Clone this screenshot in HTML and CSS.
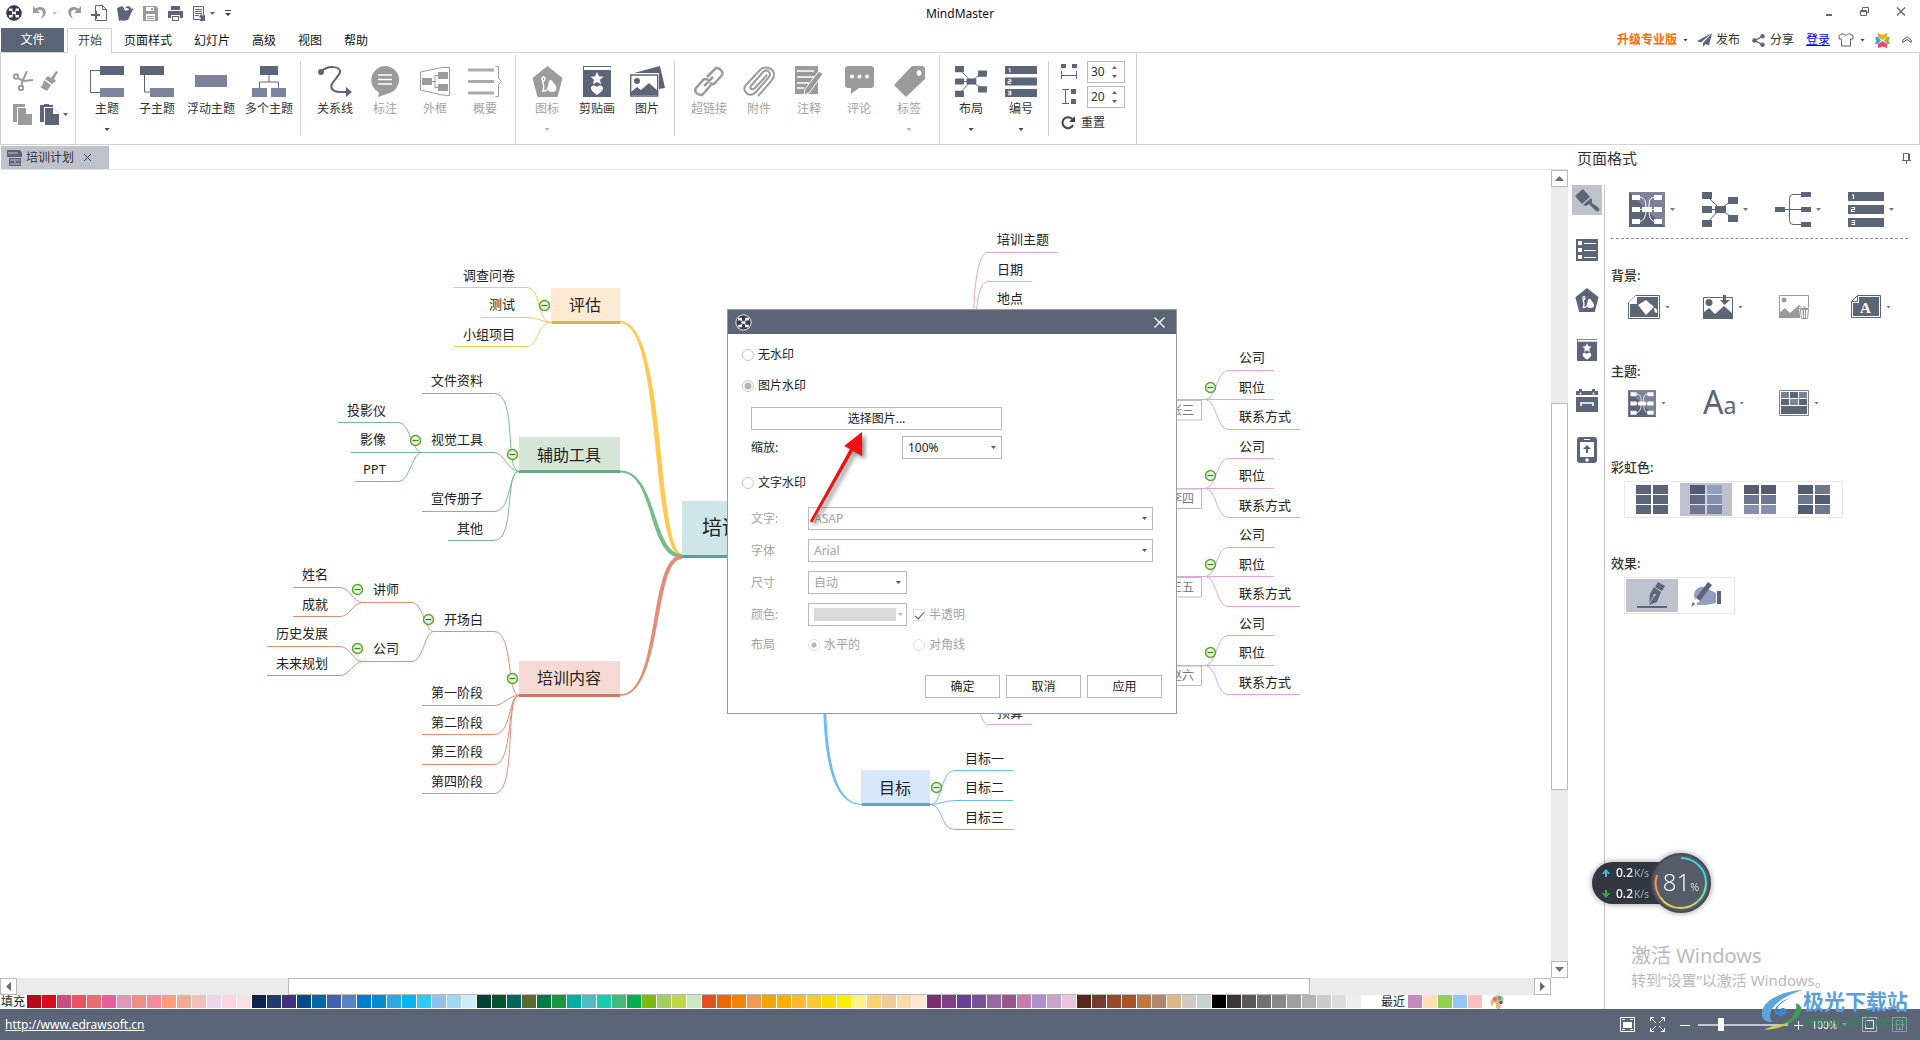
FILE: index.html
```
<!DOCTYPE html>
<html lang="zh-CN">
<head>
<meta charset="utf-8">
<title>MindMaster</title>
<link rel="stylesheet" href="styles.css">
</head>
<body>
<svg class="defs" aria-hidden="true">
  <defs>
    <radialGradient id="toggle-fill"><stop offset="0" stop-color="#fff"/><stop offset="1" stop-color="#d9efd5"/></radialGradient>
    <g id="toggle"><circle r="5" fill="url(#toggle-fill)" stroke="#5ba32b" stroke-width="1.4"/><path d="M-3 0H3" stroke="#3f8f12" stroke-width="1.4"/></g>
    <symbol id="logo" viewBox="0 0 16 16"><circle cx="8" cy="8" r="7.300" fill="#343b4c" stroke="#343b4c"/><path d="M3 3.500h3.500V6H3zM9.500 3.500H13V6H9.500zM3 10h3.500v2.500H3zM9.500 10H13v2.500H9.500zM6 7h4v2H6z" fill="#fff"/><path d="M5.500 5L8 8l2.500-3M5.500 11L8 8l2.500 3" fill="none" stroke="#fff" stroke-width=".800"/></symbol>
    <symbol id="pentagon" viewBox="0 0 30 31"><path d="M15 0L30 12l-5 19H5L0 12z"/><path d="M10 26c2-4 1-8 0-10 3-1 3-5 1-5s-2 3 0 4M11 24c2 3 4-1 6-5" fill="none" stroke="#fff" stroke-width="1.500"/><path d="M16 17c0-4 4-4 5 0 3 2 4 6 2 8-3 2-8 1-8-2z" fill="#fff"/></symbol>
    <symbol id="clipart" viewBox="0 0 28 31"><path d="M0 0h28v1H1v3h27v27H0z"/><path d="M14 6l2 4.300 4.500.500-3.500 3 1 4.500-4-2.400-4 2.400 1-4.500-3.500-3 4.500-.500zM14 29c-4-3-6-4.500-6-7 0-3 4-3.500 6-1 2-2.500 6-2 6 1 0 2.500-2 4-6 7z" fill="#fff"/></symbol>
    <symbol id="layout" viewBox="0 0 36 35"><path d="M5 4l13 13L31 8M5 31l13-14 13 9M5 17.500h13" fill="none" stroke="#5c6478"/><path d="M0 0h10v7H0zM0 14h10v7H0zM0 28h10v7H0zM26 5h10v7H26zM26 23h10v7H26zM13 14h11v7H13z"/></symbol>
    <symbol id="numbers" viewBox="0 0 36 35"><path d="M0 0h36v9H0zM0 13h36v9H0zM0 26h36v9H0z"/><path d="M4 3h1.500v4M3.500 15.500h3v2h-3v2h3.500M3.500 28.500h3v2h-3 3v2h-3" fill="none" stroke="#fff" stroke-width="1.200"/></symbol>
    <symbol id="theme" viewBox="0 0 36 35"><path d="M0 0h36v35H0z"/><path d="M0 0h36v35l-8-7-28-28z" fill="#7c829a"/><path d="M8 5c8 0 9 3 9 12S14 30 8 30M28 5c-8 0-8 3-8 12s2 13 8 13M6 17.500h24" fill="none" stroke="#fff"/><path d="M3 3h8v5H3zM3 15h8v5H3zM3 27h8v5H3zM25 3h8v5h-8zM25 15h8v5h-8zM25 27h8v5h-8zM13 15h10v5H13z" fill="#fff"/></symbol>
  </defs>
</svg>

<header class="titlebar">
  <div class="quick">
    <svg width="16" height="16"><use href="#logo"/></svg>
    <svg class="q-undo" width="24" height="14" fill="#9b9b9b"><path d="M0 0v7h7L4.500 4.500C9 2 12 6 8 13c7-4 6-12-1-12-2 0-3 .8-4.300 1.700z"/><path d="M19 6h5l-2.500 3z" fill="#c4c4c4"/></svg>
    <svg width="14" height="14" fill="#9b9b9b"><path d="M14 0v7H7l2.500-2.500C5 2 2 6 6 13-1 9 0 1 7 1c2 0 3 .8 4.300 1.700z"/></svg>
    <svg width="16" height="16"><path d="M4.500 6V.500h7l4 4v11h-11V13M11.500.500v4h4" fill="none" stroke="#5c6478"/><path d="M4 6h2v3h3v2H6v3H4v-3H0V9h4z" fill="#5c6478"/></svg>
    <svg width="16" height="16" fill="#5c6478"><path d="M0 3l5-2 2 2 1 3-3 9-3 1zM7 6l9-2-5 11-6 1z"/><path d="M8 3c2-3 6-2 6 1l2-1-2 5-4-3h2c0-2-2-2-4-2z"/></svg>
    <svg width="15" height="15" fill="#9b9b9b"><path d="M0 0h13l2 2v13H0z"/><path d="M3 1h8v4H3zM3 8h9v6H3z" fill="#fff"/><path d="M8 2h2v2H8zM4 10h7v1H4zM4 12h7v1H4z"/></svg>
    <svg width="15" height="15" fill="#5c6478"><path d="M3 0h9v4H3zM0 5h15v7h-3V9H3v3H0zM4 10h7v5H4z"/><path d="M5 11h5v3H5z" fill="#fff"/></svg>
    <svg width="22" height="15" fill="#5c6478"><path d="M.500.500h10v13H.500z" fill="none" stroke="#5c6478"/><path d="M2 3h7v1H2zM2 5h7v1H2zM2 7h7v1H2zM2 9h4v1H2zM8 8l2 2 2-1v6H7l1-3-2-1zM17 6h5l-2.500 3z"/></svg>
    <svg width="6" height="14" fill="#444"><path d="M0 4h6v1H0zM0 7h6l-3 3z"/></svg>
  </div>
  <h1 class="app-title">MindMaster</h1>
  <div class="win-buttons">
    <button type="button" aria-label="最小化"><svg width="12" height="12"><path d="M3 8h6v2H3z" fill="#666"/></svg></button>
    <button type="button" aria-label="还原"><svg width="12" height="12" fill="none" stroke="#666"><path d="M1.500 4.500h6v5h-6zM3.500 4V1.500h6v5H8M1 5.500h7"/></svg></button>
    <button type="button" aria-label="关闭"><svg width="12" height="12" fill="none" stroke="#666" stroke-width="1.300"><path d="M2 1.500l8 8M10 1.500l-8 8"/></svg></button>
  </div>
</header>

<nav class="tabs">
  <button type="button" class="file-tab">文件</button>
  <button type="button" class="tab active">开始</button>
  <button type="button" class="tab">页面样式</button>
  <button type="button" class="tab">幻灯片</button>
  <button type="button" class="tab">高级</button>
  <button type="button" class="tab">视图</button>
  <button type="button" class="tab">帮助</button>
  <div class="account">
    <button type="button" class="upgrade">升级专业版</button><i class="caret"></i>
    <svg class="send" width="15" height="14" fill="#5c6478"><path d="M15 0L0 8l4 1.500zM15 0L6 10v4l2.500-3 3.500 1.500z"/></svg><button type="button">发布</button>
    <svg class="share" width="13" height="13" fill="#5c6478"><circle cx="2.500" cy="6.500" r="2.300"/><circle cx="10.500" cy="2.300" r="2.200"/><circle cx="10.500" cy="10.700" r="2.200"/><path d="M10.500 2.300l-8 4.200 8 4.200" fill="none" stroke="#5c6478" stroke-width="1.300"/></svg><button type="button">分享</button>
    <a class="login" href="#login">登录</a>
    <svg class="shirt" width="16" height="14" fill="none" stroke="#5c6478"><path d="M5 .500c1 2 5 2 6 0l4 2v3.500l-2.500 0v7h-9v-7H1V2.500z"/></svg><i class="caret"></i>
    <svg class="butterfly" width="15" height="15"><path d="M3 0l4.500 2L12 0v4L7.500 7 3 4z" fill="#f6a81c"/><path d="M0 4h3l3 3.500L3 11H0l1.500-3.500z" fill="#33a6e0"/><path d="M15 4h-3L9 7.500l3 3.500h3l-1.500-3.500z" fill="#86bf2f"/><path d="M3 15l4.500-1.500L12 15v-4L7.500 8 3 11z" fill="#f0466e"/></svg>
    <svg width="10" height="8" fill="none" stroke="#555"><path d="M.800 4L5 .800 9.200 4v2.500L5 3.500.800 6.500z"/></svg>
  </div>
</nav>

<section class="ribbon">
  <div class="clip-group">
    <button type="button" aria-label="剪切"><svg width="20" height="20" fill="none" stroke="#9b9b9b" stroke-width="2"><circle cx="3" cy="5.500" r="2.200"/><circle cx="8" cy="17" r="2.200"/><path d="M5 7l5 3 10-1M8.500 15l1-5L14 0" /></svg></button>
    <button type="button" aria-label="格式刷"><svg width="18" height="20" fill="#9b9b9b"><path d="M16 0l2 1-4 7 2 2-4 3-7-5 3-3 3 2zM4 9l7 5-4 6-7-4c2 0 3-3 4-7z"/></svg></button>
    <button type="button" aria-label="复制"><svg width="19" height="21" fill="#9b9b9b"><path d="M0 0h12v3H4v15H0zM5 4h8l6 6v11H5z"/><path d="M13 4v6h6z" fill="#fff"/></svg></button>
    <button type="button" aria-label="粘贴"><svg width="28" height="21" fill="#5c6478"><path d="M0 1h4V0h5v1h4v2H4v15H0zM5 4h8l6 6v11H5zM23 9h5l-2.500 3z"/><path d="M13 4v6h6z" fill="#fff"/></svg></button>
  </div>

  <div class="group topics">
    <button type="button" class="tool"><svg width="34" height="31"><path d="M10 4.500H.500v22H10" fill="none" stroke="#5c6478"/><path d="M10 0h24v9H10z" fill="#5c6478"/><path d="M10 22h24v9H10z" fill="#7c829a"/></svg>主题<i class="caret"></i></button>
    <button type="button" class="tool"><svg width="34" height="31"><path d="M4.500 9v17H11" fill="none" stroke="#5c6478"/><path d="M0 0h24v9H0z" fill="#5c6478"/><path d="M10 22h24v9H10z" fill="#7c829a"/></svg>子主题</button>
    <button type="button" class="tool wide"><svg width="32" height="31"><path d="M0 9h32v12H0z" fill="#7c829a"/></svg>浮动主题</button>
    <button type="button" class="tool wide"><svg width="34" height="31"><path d="M17 9v7M7.500 22v-6h19v6" fill="none" stroke="#5c6478"/><path d="M8 0h18v9H8z" fill="#5c6478"/><path d="M0 22h15v9H0zM19 22h15v9H19z" fill="#7c829a"/></svg>多个主题</button>
  </div>
  <div class="group inserts">
    <button type="button" class="tool"><svg width="34" height="31" fill="#5c6478"><circle cx="3" cy="6" r="3"/><path d="M28 21l6 5-6 5z"/><path d="M3 6C9-1 23 0 22 6S9 18 15 24c3 3 7 2 14 2" fill="none" stroke="#5c6478" stroke-width="2"/></svg>关系线</button>
    <button type="button" class="tool" disabled><svg width="30" height="31" fill="#9b9b9b"><path d="M15 0a15 14 0 0 1 3 27.500L8 31l1-4.500A14 14 0 0 1 15 0z"/><path d="M8 9h14M8 13.500h14M8 18h14" stroke="#fff" stroke-width="1.500"/></svg>标注</button>
    <button type="button" class="tool" disabled><svg width="30" height="31" fill="#9b9b9b"><path d="M.500 6L22 1.500h7.500v28L22 29 .500 24zM12 15.500h4m2-6h-3v12h3" fill="none" stroke="#9b9b9b"/><path d="M2 12h10v7H2zM18 6h10v7H18zM18 18h10v7H18z"/></svg>外框</button>
    <button type="button" class="tool" disabled><svg width="34" height="31"><path d="M0 4h26M0 15.500h26M0 27h26" stroke="#ababab" stroke-width="3"/><path d="M27.500.500h3v12l3 3-3 3v12h-3" fill="none" stroke="#9b9b9b"/></svg>概要</button>
  </div>
  <div class="group marks">
    <button type="button" class="tool" disabled><svg width="31" height="31" fill="#9b9b9b"><use href="#pentagon"/></svg>图标<i class="caret"></i></button>
    <button type="button" class="tool"><svg width="28" height="31" fill="#5c6478"><use href="#clipart"/></svg>剪贴画</button>
    <button type="button" class="tool"><svg width="35" height="31" fill="#5c6478"><path d="M4 7L30 0l5 22-6 1V7z"/><path d="M.700 9h27v21h-27z" fill="#fff" stroke="#5c6478" stroke-width="1.400"/><circle cx="7" cy="15" r="3"/><path d="M1 29v-3l6-5 4 3 8-7 9 8v4z"/></svg>图片</button>
  </div>
  <div class="group links">
    <button type="button" class="tool" disabled><svg width="30" height="31" fill="none" stroke="#9b9b9b" stroke-width="2.500"><path d="M13 11l8-8c2-3 9 2 7 6l-7 8c-2 2-4 1-5 0M17 19l-8 9c-3 3-10-2-7-6l7-8c2-2 4-1 6 1M10 20l9-9"/></svg>超链接</button>
    <button type="button" class="tool" disabled><svg width="32" height="31" fill="none" stroke="#9b9b9b" stroke-width="2"><path d="M24 9L12 22c-3 3-6 0-4-2L20 6c4-4 9 1 6 5L13 26c-5 6-14 1-11-6L17 4c5-5 14-2 14 5 0 5-9 13-16 21"/></svg>附件</button>
    <button type="button" class="tool" disabled><svg width="28" height="31" fill="#9b9b9b"><path d="M0 0h23v28H0z"/><path d="M2 5h17M2 11h17M2 17h12M2 22h7" stroke="#fff" stroke-width="1.500"/><path d="M24 5l4 3-14 19-5 2 1-6z" stroke="#fff"/></svg>注释</button>
    <button type="button" class="tool" disabled><svg width="29" height="31" fill="#9b9b9b"><path d="M2 0h25l2 2v18l-2 2H14l-8 6v-6H2l-2-2V2z"/><g fill="#fff"><circle cx="7" cy="10.500" r="2"/><circle cx="14.500" cy="10.500" r="2"/><circle cx="22" cy="10.500" r="2"/></g></svg>评论</button>
    <button type="button" class="tool" disabled><svg width="31" height="31"><path d="M18 0h11l2 2v11L12 31 0 19zM25 4a2.500 3 0 1 0 .1 0z" fill="#9b9b9b" fill-rule="evenodd"/></svg>标签<i class="caret"></i></button>
  </div>
  <div class="group arrange">
    <button type="button" class="tool"><svg width="32" height="31" fill="#5c6478"><use href="#layout"/></svg>布局<i class="caret"></i></button>
    <button type="button" class="tool"><svg width="34" height="33" fill="#5c6478"><use href="#numbers"/></svg>编号<i class="caret"></i></button>
  </div>
  <div class="spacing">
    <label class="spin"><svg width="16" height="16" aria-label="水平间距" fill="#5c6478"><path d="M0 0h5v4H0zM11 0h5v4h-5z"/><path d="M.500 7v8M15.500 7v8M1 11.500h14" stroke="#5c6478"/></svg><span class="spin-box"><input value="30"><i></i></span></label>
    <label class="spin"><svg width="16" height="16" aria-label="垂直间距" fill="#5c6478"><path d="M10 0h5v5h-5zM10 10h5v5h-5z"/><path d="M1 .500h7M1 14.500h7M4.500 1v14" stroke="#5c6478"/></svg><span class="spin-box"><input value="20"><i></i></span></label>
    <button type="button" class="reset"><svg width="15" height="14" fill="none" stroke="#444" stroke-width="2"><path d="M11.500 3.500A5.500 5.500 0 1 0 12 9"/><path d="M14 0v6H8z" fill="#444" stroke="none"/></svg>重置</button>
  </div>
</section>

<main class="main">
  <div class="workspace">
    <div class="doc-tabs">
      <div class="doc-tab"><svg width="16" height="16" fill="#5c6478"><path d="M0 0h13l2 3v4H0zM2 8h12v8H2z"/><path d="M1 3h10M3 10h4M9 10h4M3 14h4M9 14h4M8 9v6" stroke="#bec2cd"/></svg>培训计划<button type="button" aria-label="关闭"><svg width="9" height="9" fill="none" stroke="#444"><path d="M1 1l7 7M8 1L1 8"/></svg></button></div>
    </div>
    <div class="canvas-row">
      <div class="canvas">
        <svg class="map" width="100%" height="100%">
          <g transform="translate(0 -170)">
            <g class="branch yellow">
              <path d="M454 287.500H526C542 287.500 536 322.500 552 322.500M481 317.500H526C540 317.500 542 322.500 552 322.500M454 346.500H526C540 346.500 536 322.500 552 322.500"/>
              <path class="solid" d="M620 321C668 321 656 554 683 554V558C649 558 663 323 620 323z"/>
            </g>
            <g class="branch green">
              <path d="M422 393.500H494C518 393.500 504 471.500 519 471.500M421 452.500H494C504 452.500 508 471.500 519 471.500M422 511.500H494C512 511.500 508 471.500 519 471.500M448 540.500H494C516 540.500 504 471.500 519 471.500"/>
              <path d="M338 422.500H398C410 422.500 412 452.500 422 452.500M351 452.500H422M355 481.500H398C410 481.500 412 452.500 422 452.500"/>
              <path class="solid" d="M620 470.500C658 470.500 652 554 682 554V558C646 558 656 472.500 620 472.500z"/>
            </g>
            <g class="branch coral">
              <path d="M434 631.500H494C514 631.500 506 695.500 519 695.500M422 705.500H494C504 705.500 508 695.500 519 695.500M422 734.500H494C512 734.500 508 695.500 519 695.500M422 764.500H494C514 764.500 506 695.500 519 695.500M422 793.500H494C518 793.500 504 695.500 519 695.500"/>
              <path d="M363 602.500H411C424 602.500 424 631.500 434 631.500M363 661.500H411C424 661.500 424 631.500 434 631.500"/>
              <path d="M293 587.500H340C350 587.500 353 602.500 363 602.500M293 616.500H340C350 616.500 353 602.500 363 602.500M267 646.500H340C350 646.500 353 661.500 363 661.500M267 675.500H340C350 675.500 353 661.500 363 661.500"/>
              <path class="solid" d="M620 696C664 696 653 559 682 559V555C647 555 661 694.500 620 694.500z"/>
            </g>
            <g class="branch blue">
              <path d="M1013 770.500H955C940 770.500 943 804.500 930 804.500M1013 800.500H955C945 800.500 940 804.500 930 804.500M1013 829.500H955C940 829.500 943 804.500 930 804.500"/>
              <path class="solid" d="M823 700C824 770 836 805 862 805V804C838 804 827 768 826 700z"/>
            </g>
            <g class="branch pink">
              <path d="M1058 252.500H988C977 252.500 974 290 973.500 320M1032 281.500H988C980 281.500 976.500 300 976 320M1032 311.500H988M979 708C981 718 984 724.500 988 724.500H1032"/>
              <path d="M1274 370.500H1229C1215 370.500 1218 399.500 1204 399.500M1274 399.500H1150M1300 429.500H1229C1215 429.500 1218 399.500 1204 399.500"/>
              <path d="M1274 458.500H1229C1215 458.500 1218 488.500 1204 488.500M1274 488.500H1150M1300 517.500H1229C1215 517.500 1218 488.500 1204 488.500"/>
              <path d="M1274 547.500H1229C1215 547.500 1218 576.500 1204 576.500M1274 576.500H1150M1300 606.500H1229C1215 606.500 1218 576.500 1204 576.500"/>
              <path d="M1274 635.500H1229C1215 635.500 1218 665.500 1204 665.500M1274 665.500H1150M1300 694.500H1229C1215 694.500 1218 665.500 1204 665.500"/>
            </g>
            <g class="boxes">
              <path fill="#feead2" d="M551 288h69v33h-69z"/><path fill="#dcb14b" d="M552 321h68v3h-68z"/>
              <path fill="#d5e6d9" d="M519 437h101v33H519z"/><path fill="#6aa783" d="M519 470h101v3H519z"/>
              <path fill="#f5dad4" d="M519 661h101v33H519z"/><path fill="#c97b64" d="M519 694h101v3H519z"/>
              <path fill="#cfe6e9" d="M682 501h140v54H682z"/><path fill="#46a6ab" d="M682 555h140v3H682z"/>
              <path fill="#d5e7f8" d="M861 770h69v33h-69z"/><path fill="#5fa3d3" d="M862 803h68v3h-68z"/>
            </g>
            <g class="callouts">
              <path d="M1150 400.500h51.500v19.500h-51.500zM1150 489h51.500v19.500h-51.500zM1150 577.500h51.500v19.500h-51.500zM1150 666h51.500v19.500h-51.500z"/>
              <text x="1170" y="415">张三</text><text x="1170" y="503">李四</text><text x="1170" y="592">王五</text><text x="1170" y="680">赵六</text>
            </g>
            <g class="toggles">
              <use href="#toggle" x="544.500" y="305.500"/><use href="#toggle" x="415.500" y="440.500"/><use href="#toggle" x="512.500" y="454.500"/><use href="#toggle" x="357.500" y="589.500"/><use href="#toggle" x="357.500" y="648.500"/><use href="#toggle" x="428.500" y="619.500"/><use href="#toggle" x="512.500" y="678.500"/><use href="#toggle" x="936.500" y="787.500"/><use href="#toggle" x="1210.500" y="387.500"/><use href="#toggle" x="1210.500" y="475.500"/><use href="#toggle" x="1210.500" y="564.500"/><use href="#toggle" x="1210.500" y="652.500"/>
            </g>
            <g class="main-topics">
              <text x="569" y="311">评估</text><text x="537" y="461">辅助工具</text><text x="537" y="684">培训内容</text><text x="879" y="794">目标</text>
              <text class="central" x="702" y="535">培训计划</text>
            </g>
            <g class="subtopics">
              <text x="463" y="280">调查问卷</text><text x="489" y="309">测试</text><text x="463" y="339">小组项目</text>
              <text x="431" y="385">文件资料</text><text x="431" y="444">视觉工具</text><text x="431" y="503">宣传册子</text><text x="457" y="533">其他</text>
              <text x="347" y="415">投影仪</text><text x="360" y="444">影像</text><text x="363" y="474">PPT</text>
              <text x="444" y="624">开场白</text><text x="431" y="697">第一阶段</text><text x="431" y="727">第二阶段</text><text x="431" y="756">第三阶段</text><text x="431" y="786">第四阶段</text>
              <text x="373" y="594">讲师</text><text x="373" y="653">公司</text><text x="302" y="579">姓名</text><text x="302" y="609">成就</text><text x="276" y="638">历史发展</text><text x="276" y="668">未来规划</text>
              <text x="965" y="763">目标一</text><text x="965" y="792">目标二</text><text x="965" y="822">目标三</text>
              <text x="997" y="244">培训主题</text><text x="997" y="274">日期</text><text x="997" y="303">地点</text><text x="997" y="717">预算</text>
              <text x="1239" y="362">公司</text><text x="1239" y="392">职位</text><text x="1239" y="421">联系方式</text>
              <text x="1239" y="451">公司</text><text x="1239" y="480">职位</text><text x="1239" y="510">联系方式</text>
              <text x="1239" y="539">公司</text><text x="1239" y="569">职位</text><text x="1239" y="598">联系方式</text>
              <text x="1239" y="628">公司</text><text x="1239" y="657">职位</text><text x="1239" y="687">联系方式</text>
            </g>
          </g>
        </svg>
      </div>
      <div class="vscroll">
        <button type="button" aria-label="向上"><svg width="9" height="5"><path d="M4.500 0L9 5H0z" fill="#6b6b6b"/></svg></button>
        <div class="track"><div class="thumb"></div></div>
        <button type="button" aria-label="向下"><svg width="9" height="5"><path d="M4.500 5L9 0H0z" fill="#6b6b6b"/></svg></button>
      </div>
    </div>
    <div class="hscroll">
      <button type="button" aria-label="向左"><svg width="5" height="9"><path d="M0 4.500L5 0v9z" fill="#6b6b6b"/></svg></button>
      <div class="track"><div class="thumb"></div></div>
      <button type="button" aria-label="向右"><svg width="5" height="9"><path d="M5 4.500L0 0v9z" fill="#6b6b6b"/></svg></button>
    </div>
    <div class="palette">
      <span class="fill-label">填充</span>
      <div class="swatches" id="fill-swatches"></div>
      <span class="recent-label">最近</span>
      <div class="swatches" id="recent-swatches"></div>
      <svg width="14" height="14"><path d="M1 6c2-6 9-7 12-4 2 4-1 6-2 7s1 2-1 4-4 1-4-2 0-4-2-3-1 4-2 3-2-2-1-5z" fill="#e6b873"/><circle cx="5" cy="4" r="2" fill="#e8607a"/><circle cx="9.500" cy="3" r="2" fill="#3fa9c9"/><circle cx="11" cy="7.500" r="1.800" fill="#3b66b0"/></svg>
    </div>
  </div>

  <aside class="panel">
    <header class="panel-head"><h2>页面格式</h2><button type="button" aria-label="固定"><svg width="9" height="11" fill="none" stroke="#5c6478"><path d="M1.500 0v7M6.500 0v7M0 7.500h9M2 .500h5M4.500 8v3"/><path d="M6 1h2v6H6z" fill="#5c6478" stroke="none"/></svg></button></header>
    <div class="panel-body">
      <nav class="side-tabs">
        <button type="button" class="on" aria-label="页面格式"><svg width="26" height="24" fill="#5c6478"><path d="M1 8L9 1l7 8-8 7zM17 10l-8 7 3 1 3-2 7 7c3 1 4-1 3-3l-7-5 0-3z"/></svg></button>
        <button type="button" aria-label="大纲"><svg width="22" height="22" fill="#5c6478"><path d="M0 0h22v22H0z"/><path d="M2 2h4v4H2zM2 9h4v4H2zM2 16h4v4H2zM8 4h12v1H8zM8 11h12v1H8zM8 18h12v1H8z" fill="#fff"/></svg></button>
        <button type="button" aria-label="图标"><svg width="24" height="24" fill="#5c6478"><use href="#pentagon"/></svg></button>
        <button type="button" aria-label="剪贴画"><svg width="20" height="24" fill="#5c6478"><use href="#clipart"/></svg></button>
        <button type="button" aria-label="任务"><svg width="22" height="23" fill="#5c6478"><path d="M0 2h3V0h3v2h10V0h3v2h3v4H0zM0 8h22v15H0z"/><path d="M5 17v-3h12v3" fill="none" stroke="#fff" stroke-width="1.600"/><circle cx="4.500" cy="4.500" r="1" fill="#fff"/><circle cx="17.500" cy="4.500" r="1" fill="#fff"/></svg></button>
        <button type="button" aria-label="发布"><svg width="20" height="26" fill="#5c6478"><rect width="20" height="26" rx="3"/><path d="M3 5h14v15H3zM7 2h6v1H7z" fill="#fff"/><circle cx="10" cy="23" r="1.800" fill="#fff"/><path d="M10 8l4 4H11v4H9v-4H6z"/></svg></button>
      </nav>
      <div class="format">
        <div class="layout-tools">
          <button type="button" aria-label="主题样式"><svg width="36" height="35" fill="#5c6478"><use href="#theme"/></svg><i class="caret"></i></button>
          <button type="button" aria-label="布局"><svg width="36" height="35" fill="#5c6478"><use href="#layout"/></svg><i class="caret"></i></button>
          <button type="button" aria-label="连接线"><svg width="36" height="35" fill="#5c6478"><path d="M0 15h10v5H0zM26 0h10v5H26zM26 15h10v5H26zM26 30h10v5H26z"/><path d="M10 17.500h16M26 2.500h-8q-3.500 0-3.500 4v22q0 4 3.500 4h8" fill="none" stroke="#5c6478"/></svg><i class="caret"></i></button>
          <button type="button" aria-label="编号"><svg width="36" height="35" fill="#5c6478"><use href="#numbers"/></svg><i class="caret"></i></button>
        </div>
        <section><h3>背景:</h3><div class="icons">
          <button type="button" aria-label="背景颜色"><svg width="32" height="24"><path d="M7.500.500h24v23h-31v-16z" fill="#fff" stroke="#5c6478"/><path d="M9 2h21v20H2V9h7z" fill="#5c6478"/><path d="M7.500.500v7h-7M10 10l8-5 8 7-8 8zM26 13q4 0 3 5-3 0-3-5z" fill="#fff"/></svg><i class="caret"></i></button>
          <button type="button" aria-label="背景图片"><svg width="30" height="24" fill="#5c6478"><path d="M.500 2.500h29v20H.500z" fill="none" stroke="#5c6478"/><circle cx="6" cy="7.500" r="3.500"/><path d="M0 18l6-5 6 6 9-8 9 8v5H0zM20 0h3v5h4l-5.500 5L17 5h3z"/></svg><i class="caret"></i></button>
          <button type="button" aria-label="移除背景图片" disabled><svg width="30" height="24" fill="#9b9b9b"><path d="M.500.500h29v22H.500z" fill="none" stroke="#9b9b9b"/><circle cx="5" cy="5" r="2.500"/><path d="M0 18l6-5 5 5 9-8 9 7v6H0z"/><path d="M21.500 14.500h8l-1 9h-6zM20 13.500h10M24.500 15v8M26.500 15v8" fill="none" stroke="#fff" stroke-width="2.400"/><path d="M21.500 14.500h8l-1 9h-6zM20 13.500h10M24.500 15v8M26.500 15v8M24 12h3" fill="none" stroke="#9b9b9b"/></svg></button>
          <button type="button" aria-label="水印"><svg width="30" height="24"><path d="M6.500.500h23v22H.500v-16z" fill="#fff" stroke="#5c6478"/><path d="M8 2h20v19H2V8h6z" fill="#5c6478"/><path d="M6.500.500v6H.500" fill="none" stroke="#5c6478"/><text class="glyph-a" x="9" y="18">A</text></svg><i class="caret"></i></button>
        </div></section>
        <section><h3>主题:</h3><div class="icons">
          <button type="button" aria-label="主题"><svg width="28" height="27" fill="#5c6478"><use href="#theme"/></svg><i class="caret"></i></button>
          <button type="button"><span class="font-icon">A<small>a</small></span><i class="caret"></i></button>
          <button type="button" aria-label="主题颜色"><svg width="30" height="26" fill="#5c6478"><path d="M.500.500h29v25H.500z" fill="#fff" stroke="#7c829a"/><path d="M2 16h26v8H2zM11 2h8v6h-8zM2 9h8v6H2zM20 9h8v6h-8z"/><path d="M2 2h8v6H2zM20 2h8v6h-8zM11 9h8v6h-8z" fill="#7c829a"/></svg><i class="caret"></i></button>
        </div></section>
        <section><h3>彩虹色:</h3><div class="icons"><div class="choice">
          <button type="button" aria-label="单色"><svg width="32" height="29"><path d="M0 0h15v9H0zM17 0h15v9H17zM0 10h15v9H0zM17 10h15v9H17zM0 20h15v9H0zM17 20h15v9H17z" fill="#5c6478"/></svg></button>
          <button type="button" class="on" aria-label="彩虹一"><svg width="32" height="29"><path d="M0 0h15v9H0z" fill="#535b70"/><path d="M17 0h15v9H17z" fill="#929fc2"/><path d="M0 10h15v9H0z" fill="#61687f"/><path d="M17 10h15v9H17z" fill="#8590b1"/><path d="M0 20h15v9H0z" fill="#6e7692"/><path d="M17 20h15v9H17z" fill="#7b83a2"/><path d="M0 9.500h32M0 19.500h32M16 0v29" stroke="#dfe1e8"/></svg></button>
          <button type="button" aria-label="彩虹二"><svg width="32" height="29"><path d="M0 0h15v9H0zM17 0h15v9H17z" fill="#545c71"/><path d="M0 10h15v9H0zM17 10h15v9H17z" fill="#6e7692"/><path d="M0 20h15v9H0zM17 20h15v9H17z" fill="#8590b1"/></svg></button>
          <button type="button" aria-label="彩虹三"><svg width="32" height="29"><path d="M0 0h15v9H0zM17 10h15v9H17zM0 20h15v9H0z" fill="#545c71"/><path d="M17 0h15v9H17zM0 10h15v9H0zM17 20h15v9H17z" fill="#6e7692"/></svg></button>
        </div></div></section>
        <section><h3>效果:</h3><div class="icons"><div class="choice effects">
          <button type="button" class="on" aria-label="钢笔"><svg width="32" height="27" fill="#5c6478"><path d="M1 24h30v2H1zM22 0l7 4-3 5-7-4zM18 5l7 5-4 10-8 3 1-11z"/><path d="M13 22l5-8" stroke="#bec2cd"/><circle cx="18.500" cy="13" r="1.300" fill="#bec2cd"/></svg></button>
          <button type="button" aria-label="手绘"><svg width="32" height="27"><path d="M4 14c0-8 8-12 14-7l8 4v10l-10 2H7z" fill="#949dbe"/><path d="M18 0l4 3L10 19l-4-3z" fill="#5c6478"/><path d="M6 16l4 3-7 5z" fill="#fff"/><path d="M1 25l2-5 2 2z" fill="#5c6478"/><path d="M27 9h4v13h-4z" fill="#5c6478"/></svg></button>
        </div></div></section>
      </div>
    </div>
  </aside>
</main>

<footer class="status">
  <a href="http://www.edrawsoft.cn">http://www.edrawsoft.cn</a>
  <div class="zoom">
    <button type="button" aria-label="适应页面"><svg width="15" height="15"><path d="M.500.500h14v14H.500z" fill="none" stroke="#fff"/><path d="M3 5h9v6H3zM2 2h3v1H2zM10 2h3v1h-3zM2 12h3v1H2zM10 12h3v1h-3z" fill="#fff"/></svg></button>
    <button type="button" aria-label="全屏"><svg width="15" height="15" fill="none" stroke="#fff"><path d="M.500 4V.500H4M11 .500h3.500V4M14.500 11v3.500H11M4 14.500H.500V11M1 1l5 5M14 1L9 6M14 14L9 9M1 14l5-5"/></svg></button>
    <button type="button" aria-label="缩小"><svg width="10" height="10"><path d="M0 5.500h10" stroke="#fff"/></svg></button>
    <input type="range" min="0" max="100" value="24" aria-label="缩放">
    <button type="button" aria-label="放大"><svg width="9" height="10"><path d="M0 5.500h9M4.500 1v9" stroke="#fff"/></svg></button>
    <button type="button" class="percent">100%<i class="caret"></i></button>
    <button type="button" aria-label="页面边框"><svg width="15" height="15" fill="none" stroke="#fff"><path d="M.500.500h14v14H.500z" stroke-dasharray="1 1"/><path d="M3.500 3.500h8v8h-8z"/></svg></button>
    <button type="button" aria-label="分页"><svg width="15" height="15" fill="none" stroke="#9298a8"><path d="M.500.500h14v14H.500zM4.500 3.500h6v9h-6zM2 7.500h11M7.500 3v9"/></svg></button>
  </div>
</footer>

<form class="dialog" role="dialog" aria-label="水印">
  <div class="dialog-bar"><svg width="17" height="17"><use href="#logo"/><circle cx="8.500" cy="8.500" r="7.700" fill="none" stroke="#fff"/></svg><button type="button" aria-label="关闭"><svg width="11" height="11" stroke="#fff" stroke-width="1.300"><path d="M.500.500l10 10M10.500.500l-10 10"/></svg></button></div>
  <div class="dialog-body">
    <label class="mode"><input type="radio" name="mode">无水印</label>
    <label class="mode picture"><input type="radio" name="mode" checked>图片水印</label>
    <button type="button" class="pick">选择图片...</button>
    <div class="scale"><label for="scale">缩放:</label><span class="select"><select id="scale"><option>100%</option></select></span></div>
    <label class="mode words"><input type="radio" name="mode">文字水印</label>
    <div class="fields">
      <label for="wm-text">文字:</label><span class="select"><select id="wm-text" disabled><option>ASAP</option></select></span>
      <label for="wm-font">字体</label><span class="select"><select id="wm-font" disabled><option>Arial</option></select></span>
      <label for="wm-size">尺寸</label><span class="select small"><select id="wm-size" disabled><option>自动</option></select></span>
      <label for="wm-color">颜色:</label><div class="pair"><span class="select small color"><button type="button" id="wm-color" disabled></button></span><label class="inline"><input type="checkbox" checked disabled>半透明</label></div>
      <span>布局</span><div class="pair radios"><label class="inline"><input type="radio" name="dir" checked disabled>水平的</label><label class="inline"><input type="radio" name="dir" disabled>对角线</label></div>
    </div>
    <div class="actions"><button type="button">确定</button><button type="button">取消</button><button type="button">应用</button></div>
  </div>
  <svg class="pointer" width="70" height="110"><path d="M8 99L10 101 51 29 60 34 60 10 42 24 48 27z" fill="#f40f0f"/></svg>
</form>

<div class="speed">
  <div class="rates">
    <span><svg width="8" height="8"><path d="M4 0l4 4.500-1 .800L5 4v4H3V4L1 5.300 0 4.500z" fill="#4db5ee"/></svg>0.2<small>K/s</small></span>
    <span><svg width="8" height="8"><path d="M4 8l4-4.500-1-.800L5 4V0H3v4L1 2.700 0 3.500z" fill="#2fae3e"/></svg>0.2<small>K/s</small></span>
  </div>
  <div class="gauge"><svg width="60" height="60" fill="none" stroke-width="2"><circle cx="30" cy="30" r="29" fill="#555b69" stroke="#454a57"/><path d="M30 5A25 25 0 0 1 55 30" stroke="#45d3cf"/><path d="M55 30A25 25 0 0 1 46 49" stroke="#79dfa3"/><path d="M46 49A25 25 0 0 1 30 55" stroke="#c3dc60"/><path d="M30 55A25 25 0 0 1 9 44" stroke="#ecd04d"/><path d="M9 44A25 25 0 0 1 6 22" stroke="#f2934f"/></svg><b>81<small>%</small></b></div>
</div>

<div class="activate"><p class="big">激活 Windows</p><p>转到“设置”以激活 Windows。</p></div>

<div class="site-mark">
  <svg width="44" height="42"><path d="M42 1C20 2 0 12 1 25c0 6 4 8 10 8C5 24 13 10 42 1z" fill="#5ba4dc"/><path d="M32 8C16 12 7 25 19 27c6 0 8-5 4-8-4 0-7 3-5 5-6-3 2-12 14-16z" fill="#3f86cc"/><path d="M35 14c10 4 5 14-6 20-8 4-18 5-26 7 12-4 23-6 28-13 4-5 5-9 4-14z" fill="#3a9a58"/><path d="M3 41c8-5 18-5 26-8-6 5-14 7-26 8z" fill="#c9cf55"/></svg>
  <div><strong>极光下载站</strong><em>www.xz7.com</em></div>
</div>
<script src="palette.js"></script>
</body>
</html>
```
FILE: palette.js
```
const fills = `#b50a17 #d90c1f #c94f7c #e95464 #ec6b70 #e85d9c #e198b8 #ee8f86 #f08c9b #ff9e78 #f0ab96 #f6bebb #ecd5e6 #fed3e4 #fde0e3
#0f2350 #223a70 #432f7d #084a8f #0068a7 #3f63af #5383c3 #007bd0 #008ccf #2ca9e1 #00b5f0 #2fc8f9 #8dc2ea #a0d8ef #d0ebf5
#004035 #00572f #006660 #556b2f #007b43 #1d953f #00afa0 #51bdc0 #19cdb1 #45b97c #00b050 #7fb80e #a3cf62 #bed742 #cce6c8
#e2511f #ec6800 #f08300 #f19a54 #f0a500 #ffad00 #fdb933 #fac92f #ffd900 #ffec00 #fdf283 #fdd26e #edcc99 #fddba7 #fde8cf
#7a306f #824083 #684197 #745399 #9767a1 #9b5689 #c97bac #ac92cd #c8a5c8 #ecc2dc
#5a271c #753a30 #954b2b #a95426 #c2773e #b4866b #deb887 #d4cac4 #cad3cb
#000000 #3e3535 #595757 #727171 #888888 #9fa0a0 #b5b5b6 #cbcccc #dcdddd #eeeeee`.split(/\s+/);
const recent = ["#c48db8", "#fee1b2", "#92d050", "#94c5f6", "#f9c0c0"];

function fill(id, colors) {
  const row = document.getElementById(id);
  for (const color of colors) {
    const swatch = document.createElement("button");
    swatch.type = "button";
    swatch.title = color;
    swatch.style.background = color;
    row.append(swatch);
  }
}
fill("fill-swatches", fills);
fill("recent-swatches", recent);
```
FILE: styles.css
```
* { box-sizing: border-box; }
:root { --slate: #5c6478; --line: #d2d2d2; --box: #b9b9b9; --picked: #bec2cd; }
html, body { height: 100%; }
body {
  margin: 0; display: flex; flex-direction: column; position: relative; overflow: hidden;
  background: #fff; color: #333; font: 12px/16px "Noto Sans", "Noto Sans CJK SC", sans-serif;
}
button, input, select { font: inherit; color: inherit; }
button { border: 0; padding: 0; margin: 0; background: none; }
svg { display: block; flex: none; }
h1, h2, h3, p { margin: 0; font-weight: 400; }
.defs { position: absolute; width: 0; height: 0; }
.caret { width: 5px; height: 3px; flex: none; background: #444; clip-path: polygon(0 0, 100% 0, 50% 100%); }
:disabled .caret { background: #b5b5b5; }

.titlebar { display: grid; grid-template-columns: 1fr auto 1fr; align-items: center; height: 28px; flex: none; }
.quick { display: flex; align-items: center; gap: 10px; padding: 0 0 2px 6px; }
.q-undo { margin-left: 1px; }
.app-title { font-size: 12px; line-height: 28px; color: #111; }
.win-buttons { display: flex; justify-content: flex-end; gap: 24px; padding: 0 13px 4px 0; }

.tabs { display: flex; height: 24px; flex: none; color: #111; }
.file-tab { width: 63px; margin: 0 3px 0 1px; background: var(--slate); color: #fff; }
.tab { padding: 0 12px; margin: 1px -2px 0 0; }
.tab.active { height: 25px; margin: 0 0 -1px; padding: 0 9px 0 10px; background: #fff; border: 1px solid var(--line); border-bottom: 0; color: #444; position: relative; }
.tab:nth-of-type(n+4) { padding: 0 12px; }
.account { display: flex; align-items: center; margin-left: auto; padding-right: 8px; color: #333; }
.upgrade { color: #ff6a00; font-weight: 700; margin-right: 6px; }
.send { margin: 0 4px 0 9px; }
.share { margin: 0 5px 0 12px; }
.login { color: #00f; margin: 0 8px 0 12px; }
.shirt { margin-right: 6px; }
.butterfly { margin: 0 12px 0 10px; }

.ribbon { display: flex; height: 93px; flex: none; border: 1px solid var(--line); }
.clip-group { display: grid; grid-template-columns: 27px 28px; gap: 13px 0; align-content: start; padding: 16px 8px 0 12px; margin-top: 2px; border-right: 1px solid var(--line); width: 75px; }
.clip-group button { height: 20px; }
.group { display: flex; border-right: 1px solid var(--line); margin-top: 2px; }
.topics { padding: 0 2px 0 6px; }
.inserts { padding: 0 5px 0 10px; }
.marks { padding: 0 2px 0 6px; }
.links { padding: 0 5px 0 10px; }
.arrange { padding: 0 2px 0 6px; }
.topics, .marks, .arrange { border-right: 0; }
.topics::after, .marks::after, .arrange::after { content: ""; width: 1px; height: 75px; margin: 6px -3px 0 2px; background: var(--line); }
.tool { width: 50px; display: flex; flex-direction: column; align-items: center; padding-top: 11px; line-height: 16px; }
.tool.wide { width: 58px; }
.tool svg { margin-bottom: 4px; height: 31px; }
.tool .caret { margin-top: 11px; }
.tool:disabled { color: #a3a3a3; }
.spacing { display: flex; flex-direction: column; width: 89px; gap: 3px; padding: 8px 0 0 13px; border-right: 1px solid var(--line); }
.spin { display: flex; align-items: center; gap: 10px; }
.spin-box { display: flex; width: 38px; height: 22px; border: 1px solid var(--box); }
.spin-box input { width: 24px; border: 0; padding: 0 0 0 3px; background: none; }
.spin-box i { width: 5px; height: 12px; margin: 4px 0 0; background: #666; clip-path: polygon(0 3px, 50% 0, 100% 3px, 0 3px, 0 9px, 100% 9px, 50% 12px, 0 9px); }
.reset { display: flex; align-items: center; gap: 5px; height: 24px; }

.main { flex: 1; display: flex; min-height: 0; }
.workspace { flex: 1; min-width: 0; display: flex; flex-direction: column; }
.doc-tabs { height: 25px; flex: none; padding: 1px 0 0 1px; border-bottom: 1px solid #e3e3e3; }
.doc-tab { width: 108px; height: 23px; display: flex; align-items: center; padding-left: 6px; gap: 3px; background: var(--picked); }
.doc-tab button { margin-left: 6px; }
.canvas-row { flex: 1; display: flex; min-height: 0; }
.canvas { flex: 1; overflow: hidden; }
.vscroll { width: 17px; display: flex; flex-direction: column; background: #ebebeb; }
.vscroll button, .hscroll button { width: 17px; height: 17px; display: flex; align-items: center; justify-content: center; background: #fff; border: 1px solid var(--box); flex: none; }
.vscroll .track { flex: 1; display: flex; flex-direction: column; }
.vscroll .thumb { margin-top: 216px; height: 387px; background: #fff; border: 1px solid var(--box); }
.hscroll { height: 17px; flex: none; display: flex; margin-right: 17px; background: #ebebeb; }
.hscroll .track { flex: 1; display: flex; }
.hscroll .thumb { margin-left: 271px; width: 1022px; background: #fff; border: 1px solid var(--box); }
.palette { height: 14px; flex: none; display: flex; line-height: 13px; color: #222; }
.fill-label { width: 26px; margin-left: 1px; white-space: nowrap; }
.recent-label { margin-left: 19px; width: 27px; white-space: nowrap; }
.swatches { display: flex; gap: 1px; margin-right: 1px; }
.swatches button { width: 14px; height: 13px; }
.palette svg { margin-left: 7px; }

.map text { fill: #222; }
.subtopics { font-size: 13px; }
.main-topics { font-size: 16px; }
.central { font-size: 20px; }
.branch path { fill: none; stroke: currentColor; }
.branch .solid { fill: currentColor; stroke: none; }
.yellow { color: #ffc84f; }
.green { color: #78bb8e; }
.coral { color: #e38c77; }
.blue { color: #6dbcf3; }
.pink { color: #e2a5d5; }
.callouts path { fill: #fff; stroke: #bcbcbc; }
.map .callouts text { fill: #777; }

.panel { width: 352px; flex: none; display: flex; flex-direction: column; }
.panel-head { display: flex; justify-content: space-between; align-items: center; height: 40px; padding: 0 9px 14px; }
.panel-head h2 { font-size: 15px; line-height: 26px; }
.panel-body { flex: 1; display: flex; }
.side-tabs { width: 36px; display: flex; flex-direction: column; align-items: center; gap: 20px; padding-left: 2px; }
.side-tabs button { width: 30px; height: 30px; display: flex; align-items: center; justify-content: center; }
.on { background: var(--picked); }
.format { flex: 1; border-left: 1px solid #c4c4c4; }
.format .caret { background: #777; }
.layout-tools { display: flex; gap: 28px; padding: 7px 0 11px 18px; margin: 0 12px 26px 6px; border-bottom: 1px dashed #8f8f8f; }
.layout-tools button, .icons > button { display: flex; align-items: center; gap: 5px; margin-right: -1px; }
.format section { height: 96px; padding-left: 6px; }
.format h3 { font-size: 13px; line-height: 20px; font-weight: 500; }
.icons { height: 44px; display: grid; grid-template-columns: 75px 76px 72px 60px; align-items: center; padding-left: 17px; }
.glyph-a { font: 700 15px "Liberation Serif", serif; fill: #fff; }
.font-icon { color: var(--slate); font-size: 32px; line-height: 32px; margin-right: -2px; }
.font-icon small { font-size: 23px; }
.choice { display: flex; gap: 2px; width: 219px; height: 37px; padding: 1px; margin-left: -4px; border: 1px solid #e9e9e9; }
.choice.effects { width: 111px; }
.choice button { width: 52px; height: 33px; display: flex; align-items: center; justify-content: center; }

.status { height: 31px; flex: none; display: flex; align-items: center; justify-content: space-between; padding: 0 13px 0 5px; background: var(--slate); color: #fff; }
.status a { color: #fff; }
.zoom { display: flex; align-items: center; gap: 15px; }
.zoom .percent { display: flex; align-items: center; gap: 5px; font-size: 10px; margin-left: -6px; }
.zoom .caret { background: #9298a8; }
.zoom input { appearance: none; width: 90px; height: 14px; margin: 0 -9px 0 -7px; background: linear-gradient(#c3c7d0, #c3c7d0) center / 100% 2px no-repeat; }
.zoom input::-webkit-slider-thumb { appearance: none; width: 6px; height: 13px; background: #fff; }

.dialog { position: absolute; left: 727px; top: 309px; width: 450px; height: 405px; background: #fff; border: 1px solid #9b9b9b; color: #222; }
.dialog-bar { display: flex; justify-content: space-between; align-items: center; height: 24px; padding: 0 11px 0 7px; background: var(--slate); }
.dialog-body { padding: 12px 14px 0 14px; display: flex; flex-direction: column; align-items: flex-start; }
.dialog input { appearance: none; width: 12px; height: 12px; margin: 0; border: 1px solid #c6c6c6; border-radius: 50%; background: #fff; flex: none; }
.dialog input:checked { background: radial-gradient(circle, #b4b4b4 3px, #fff 4px); }
.dialog input:disabled { border-color: #e2e2e2; }
.dialog input:disabled:checked { background: radial-gradient(circle, #b4b4b4 2px, #fff 3px); }
.dialog input[type="checkbox"]:checked { border-radius: 0; background: #fff; position: relative; }
.dialog input[type="checkbox"]::after { content: ""; position: absolute; left: 1px; top: 2px; width: 8px; height: 4px; border: solid #555; border-width: 0 0 1px 1px; transform: rotate(-48deg); }
.mode { display: flex; align-items: center; gap: 4px; height: 18px; }
.mode.picture { margin: 13px 0 12px; }
.pick { width: 251px; height: 23px; margin-left: 9px; border: 1px solid var(--box); }
.scale { display: flex; justify-content: space-between; align-items: center; width: 251px; margin: 6px 0 15px 9px; }
.words { margin-bottom: 15px; }
.select { position: relative; width: 100px; height: 23px; display: block; }
.select select { appearance: none; display: block; width: 100%; height: 100%; padding: 0 5px; border: 1px solid var(--box); border-radius: 0; background: #fff; opacity: 1; }
.select::after { content: ""; position: absolute; right: 6px; top: 10px; width: 5px; height: 3px; background: #555; clip-path: polygon(0 0, 100% 0, 50% 100%); }
.fields { display: grid; grid-template-columns: 57px 345px; row-gap: 9px; align-items: center; margin-left: 9px; color: #a3a3a3; }
.fields .select { width: 345px; color: #a3a3a3; }
.fields .select.small { width: 99px; }
.color { border: 1px solid var(--box); padding: 4px 10px 4px 5px; }
.color button { display: block; width: 82px; height: 13px; background: #dadada; }
.color.select::after { right: 3px; top: 9px; background: #b5b5b5; }
.pair { display: flex; gap: 6px; }
.inline { display: flex; align-items: center; gap: 4px; }
.radios { height: 20px; }
.radios .inline { width: 99px; }
.actions { display: flex; gap: 6px; margin: 20px 0 0 auto; }
.actions button { width: 75px; height: 23px; border: 1px solid var(--box); }
.pointer { position: absolute; left: 74px; top: 112px; filter: drop-shadow(3px 3px 2px rgba(0, 0, 0, .45)); pointer-events: none; }

.speed { position: absolute; left: 1592px; top: 853px; display: flex; align-items: center; color: #fff; filter: drop-shadow(0 0 3px rgba(0, 0, 0, .4)); }
.rates { width: 70px; height: 42px; padding-left: 10px; border-radius: 21px 0 0 21px; background: #323640; }
.rates span { display: flex; align-items: center; gap: 5px; height: 21px; font-weight: 500; }
.rates svg { margin-right: 1px; }
.rates small { color: #9b9fa8; font-size: 10px; margin-left: -4px; }
.gauge { position: relative; margin-left: -11px; }
.gauge b { position: absolute; inset: 0; text-align: center; font: 300 24px/58px "Open Sans", sans-serif; }
.gauge small { font-size: 11px; }
.activate { position: absolute; left: 1631px; top: 942px; color: #b9b9b9; font-size: 15px; line-height: 20px; }
.activate .big { font-size: 20px; line-height: 28px; }
.site-mark { position: absolute; left: 1761px; top: 989px; display: flex; }
.site-mark div { display: flex; flex-direction: column; margin-left: -2px; }
.site-mark strong { font-size: 21px; line-height: 25px; color: #5a9fdc; white-space: nowrap; }
.site-mark em { font: 700 16px/16px "Liberation Sans", sans-serif; color: #31895a; opacity: .8; }
```
